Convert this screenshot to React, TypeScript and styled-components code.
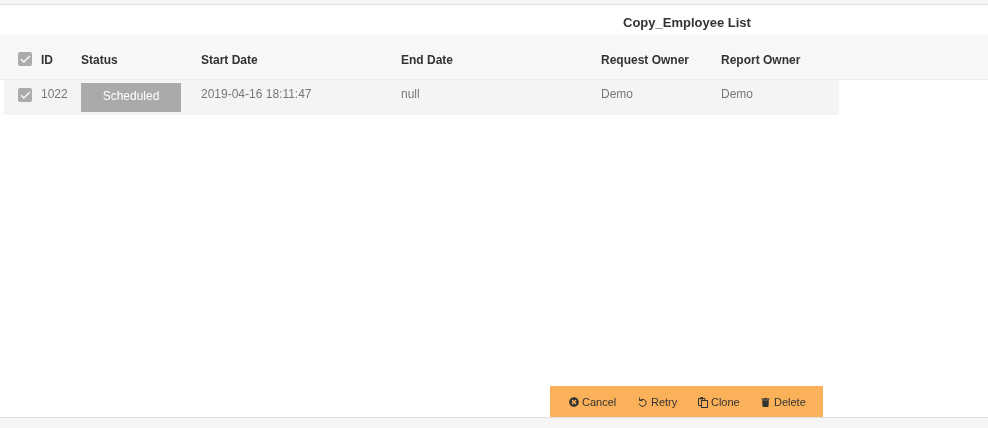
import styled, { createGlobalStyle } from 'styled-components';
import { FaTimesCircle, FaTrash } from 'react-icons/fa';

const GlobalStyle = createGlobalStyle`
  html, body {
    margin: 0;
    padding: 0;
    background: #fff;
    overflow: hidden;
  }
  body {
    font-family: "Liberation Sans", Arial, sans-serif;
  }
  #root {
    will-change: opacity;
  }
`;

const Page = styled.div`
  width: 988px;
  height: 428px;
  display: flex;
  flex-direction: column;
`;

const TopStrip = styled.div`
  height: 4px;
  background: #f5f5f5;
  border-bottom: 1px solid #e0e0e0;
`;

const Main = styled.main`
  flex: 1;
  display: flex;
  flex-direction: column;
  min-height: 0;
`;

const Title = styled.h1`
  margin: 0;
  height: 30px;
  padding-left: 623px;
  font-size: 13px;
  line-height: 36px;
  font-weight: 700;
  color: #333;
`;

const Table = styled.div`
  padding-left: 4px;
  flex: 1;
`;

const HeaderRow = styled.div`
  height: 44px;
  box-sizing: content-box;
  margin-left: -4px;
  padding-left: 4px;
  display: flex;
  align-items: flex-start;
  background: #f7f7f7;
  border-bottom: 1px solid #eee;
`;

const BodyRow = styled.div`
  width: 835px;
  height: 35px;
  display: flex;
  align-items: flex-start;
  background: #f4f4f4;
`;

const Cell = styled.div<{ $w: number; $head?: boolean }>`
  width: ${({ $w }) => $w}px;
  flex: none;
  font-size: 12px;
  line-height: 14px;
  font-weight: ${({ $head }) => ($head ? 700 : 400)};
  color: ${({ $head }) => ($head ? '#333' : '#777')};
  padding-top: ${({ $head }) => ($head ? 18 : 7)}px;
`;

const CheckCell = styled.div<{ $head?: boolean }>`
  width: 37px;
  flex: none;
  padding-left: 14px;
  padding-top: ${({ $head }) => ($head ? 17 : 8)}px;
  box-sizing: border-box;
  display: flex;
`;

const CheckBox = styled.span`
  width: 14px;
  height: 14px;
  border-radius: 2px;
  background: #ababab;
  display: flex;
  align-items: center;
  justify-content: center;
  svg {
    display: block;
  }
`;

const StatusBadge = styled.div`
  width: 100px;
  height: 29px;
  margin-top: 3px;
  background: #aaa;
  color: #fff;
  font-size: 12px;
  line-height: 27px;
  text-align: center;
`;

const StatusCell = styled.div`
  width: 120px;
  flex: none;
`;

const ActionBar = styled.div`
  align-self: flex-start;
  margin-left: 550.3px;
  width: 273px;
  height: 31px;
  box-sizing: border-box;
  padding: 1px 0 0 18.7px;
  display: flex;
  align-items: center;
  background: #fbb05a;
`;

const ActionButton = styled.button<{ $w: number; $gap: number }>`
  width: ${({ $w }) => $w}px;
  flex: none;
  border: 0;
  padding: 0;
  background: none;
  display: flex;
  align-items: center;
  gap: ${({ $gap }) => $gap}px;
  font-family: inherit;
  font-size: 11px;
  line-height: 13px;
  color: #333;
  svg {
    display: block;
    flex: none;
  }
`;

const BottomStrip = styled.div`
  height: 10px;
  background: #f5f5f5;
  border-top: 1px solid #e0e0e0;
`;

const Check = () => (
  <CheckBox>
    <svg width="11" height="8" viewBox="0 0 11 8" fill="none">
      <path d="M1 4.2 3.8 7 10 1" stroke="#f7f7f7" strokeWidth="1.5" />
    </svg>
  </CheckBox>
);

const RetryIcon = () => (
  <svg width="9" height="10" viewBox="0 0 9 10" fill="none">
    <path d="M2.3 3.2A3.5 3.5 0 1 1 1.2 6.6" stroke="#333" strokeWidth="1" />
    <path d="M1.6 0.6V3.6H4.6" stroke="#333" strokeWidth="1" />
  </svg>
);

const CloneIcon = () => (
  <svg width="10" height="11" viewBox="0 0 10 11" fill="none">
    <path d="M3.5 8.5H.5V1.5H7V3" stroke="#333" />
    <rect x="3.5" y="3.5" width="6" height="7" stroke="#333" />
    <rect x="2.5" y="0" width="2.5" height="2.5" fill="#333" />
  </svg>
);

const columns = [
  { name: 'Start Date', value: '2019-04-16 18:11:47', w: 200 },
  { name: 'End Date', value: 'null', w: 200 },
  { name: 'Request Owner', value: 'Demo', w: 120 },
  { name: 'Report Owner', value: 'Demo', w: 118 },
];

const actions = [
  { label: 'Cancel', icon: <FaTimesCircle size={10} color="#333" />, w: 69, gap: 3 },
  { label: 'Retry', icon: <RetryIcon />, w: 60, gap: 4 },
  { label: 'Clone', icon: <CloneIcon />, w: 63, gap: 3 },
  { label: 'Delete', icon: <FaTrash size={9} color="#333" />, w: 52, gap: 4 },
];

export default function App() {
  return (
    <Page>
      <GlobalStyle />
      <TopStrip />
      <Main>
        <Title>Copy_Employee List</Title>
        <Table>
          <HeaderRow>
            <CheckCell $head>
              <Check />
            </CheckCell>
            <Cell $w={40} $head>ID</Cell>
            <Cell $w={120} $head>Status</Cell>
            {columns.map((c) => (
              <Cell key={c.name} $w={c.w} $head>{c.name}</Cell>
            ))}
          </HeaderRow>
          <BodyRow>
            <CheckCell>
              <Check />
            </CheckCell>
            <Cell $w={40}>1022</Cell>
            <StatusCell>
              <StatusBadge>Scheduled</StatusBadge>
            </StatusCell>
            {columns.map((c) => (
              <Cell key={c.name} $w={c.w}>{c.value}</Cell>
            ))}
          </BodyRow>
        </Table>
        <ActionBar>
          {actions.map((a) => (
            <ActionButton key={a.label} $w={a.w} $gap={a.gap}>
              {a.icon}
              {a.label}
            </ActionButton>
          ))}
        </ActionBar>
      </Main>
      <BottomStrip />
    </Page>
  );
}
